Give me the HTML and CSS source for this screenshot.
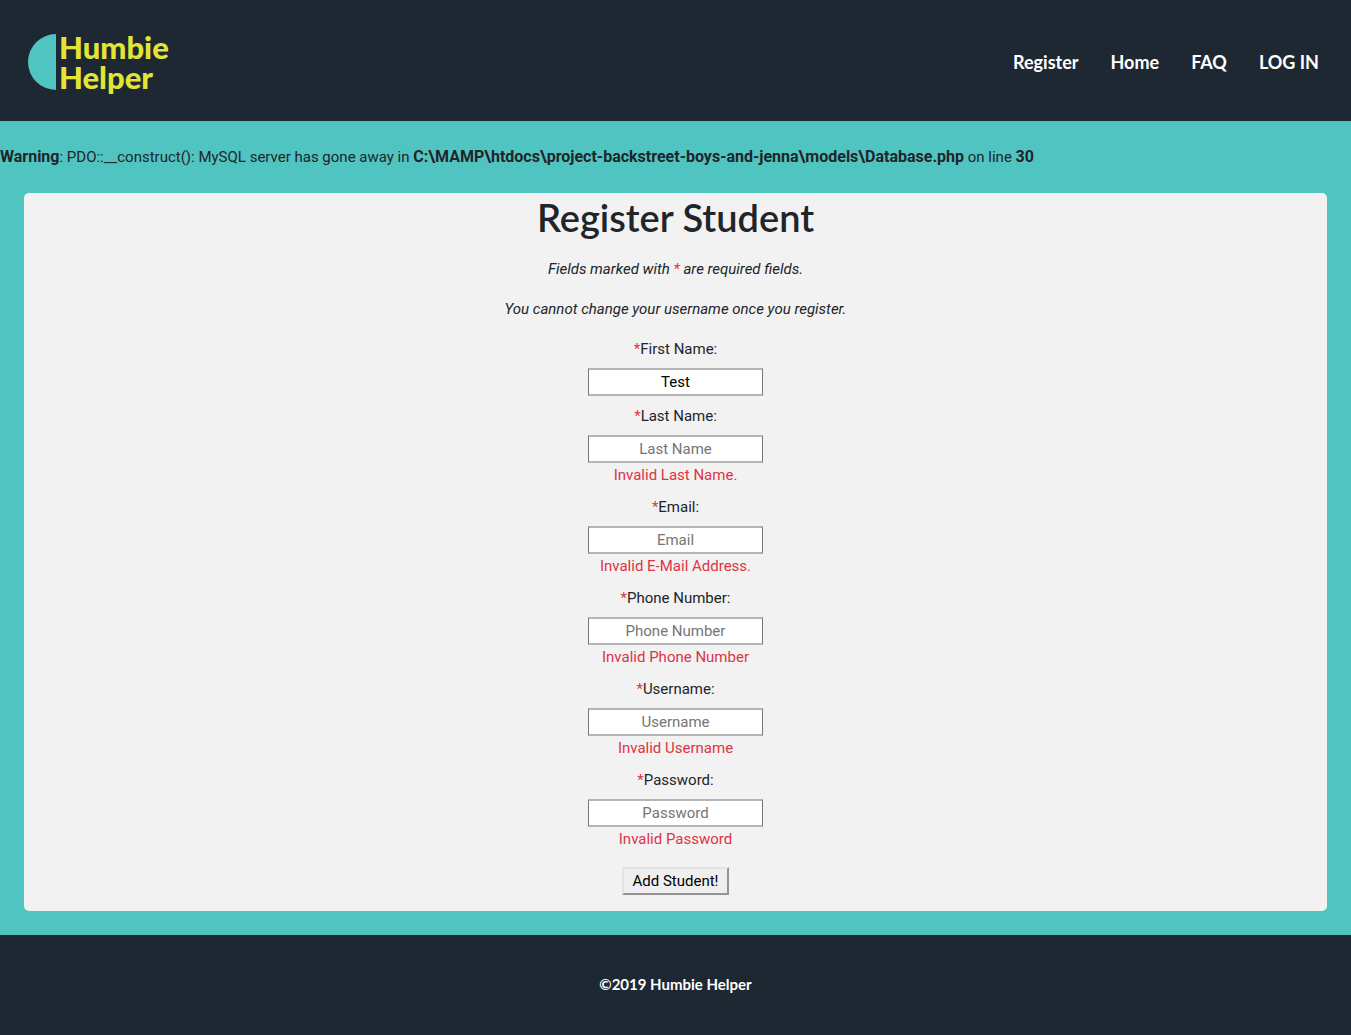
FILE: index.html
```
<!DOCTYPE html>
<html lang="en">
<head>
<meta charset="utf-8">
<meta name="viewport" content="width=device-width, initial-scale=1">
<title>Humbie Helper</title>
<link rel="stylesheet" href="styles.css">
</head>
<body>
<header class="site-header">
  <a class="logo" href="#">
    <svg class="logo-mark" viewBox="0 0 28 56" aria-hidden="true"><path d="M28 0A28 28 0 0 0 28 56Z" fill="#50c4c1"/></svg>
    <span class="logo-text">Humbie<br>Helper</span>
  </a>
  <nav class="site-nav">
    <a href="#">Register</a>
    <a href="#">Home</a>
    <a href="#">FAQ</a>
    <a href="#">LOG IN</a>
  </nav>
</header>
<p class="warning"><b>Warning</b>: PDO::__construct(): MySQL server has gone away in <b>C:\MAMP\htdocs\project-backstreet-boys-and-jenna\models\Database.php</b> on line <b>30</b></p>
<main class="card">
  <h1>Register Student</h1>
  <p class="note">Fields marked with <span class="danger">*</span> are required fields.</p>
  <p class="note">You cannot change your username once you register.</p>
  <form class="form">
    <div class="field">
      <label for="first"><span class="danger">*</span>First Name:</label>
      <input id="first" type="text" value="Test" placeholder="First Name">
    </div>
    <div class="field">
      <label for="last"><span class="danger">*</span>Last Name:</label>
      <input id="last" type="text" placeholder="Last Name">
      <span class="danger">Invalid Last Name.</span>
    </div>
    <div class="field">
      <label for="email"><span class="danger">*</span>Email:</label>
      <input id="email" type="text" placeholder="Email">
      <span class="danger">Invalid E-Mail Address.</span>
    </div>
    <div class="field">
      <label for="phone"><span class="danger">*</span>Phone Number:</label>
      <input id="phone" type="text" placeholder="Phone Number">
      <span class="danger">Invalid Phone Number</span>
    </div>
    <div class="field">
      <label for="username"><span class="danger">*</span>Username:</label>
      <input id="username" type="text" placeholder="Username">
      <span class="danger">Invalid Username</span>
    </div>
    <div class="field">
      <label for="password"><span class="danger">*</span>Password:</label>
      <input id="password" type="password" placeholder="Password">
      <span class="danger">Invalid Password</span>
    </div>
    <button class="submit" type="button">Add Student!</button>
  </form>
</main>
<footer class="site-footer">©2019 Humbie Helper</footer>
</body>
</html>
```
FILE: styles.css
```
* { box-sizing: border-box; }
body {
  margin: 0;
  min-height: 100vh;
  display: flex;
  flex-direction: column;
  background: #50c4c1;
  color: #212529;
  font: 15px/24px Roboto, sans-serif;
}
.site-header {
  display: flex;
  justify-content: space-between;
  align-items: center;
  padding: 32px 32px 29px 28px;
  background: #1e2833;
  font-family: Lato, sans-serif;
}
.logo {
  display: flex;
  align-items: center;
  gap: 3px;
  text-decoration: none;
}
.logo-mark { width: 28px; height: 56px; }
.logo-text {
  color: #e4e436;
  font-size: 31px;
  line-height: 30px;
  font-weight: 900;
}
.site-nav { display: flex; gap: 32px; }
.site-nav a {
  color: #fff;
  font-size: 18px;
  font-weight: 700;
  text-decoration: none;
}
.warning { margin: 24px 0; }
.warning b { font-size: 16px; }
.card {
  margin: 0 24px 24px;
  padding-bottom: 16px;
  border-radius: 5px;
  background: #f2f2f2;
  text-align: center;
}
h1 {
  margin: 0 0 16px;
  font: 600 38px/48px Lato, sans-serif;
}
.note { margin: 0 0 16px; font-style: italic; }
.danger { color: #dc3545; }
.form {
  display: flex;
  flex-direction: column;
  align-items: center;
}
.field {
  display: flex;
  flex-direction: column;
  align-items: center;
  margin-bottom: 8px;
}
.field label { margin-bottom: 7px; }
.field input {
  width: 175px;
  height: 28px;
  padding: 1px 2px;
  border: solid;
  border-width: 2px 1px;
  border-color: #b5b5b5 #767676;
  background: #fff;
  color: #000;
  font: inherit;
  text-align: center;
}
.field input::placeholder { color: #757575; }
.submit {
  height: 28px;
  width: 107px;
  margin-top: 8px;
  padding: 0;
  border: 2px solid;
  border-color: #e3e3e3 #949494 #949494 #e3e3e3;
  background: #efefef;
  color: #000;
  font: inherit;
}
.site-footer {
  flex: 1;
  padding: 37px 0;
  background: #1e2833;
  color: #fff;
  font: 700 15px/24px Lato, sans-serif;
  text-align: center;
}
```
